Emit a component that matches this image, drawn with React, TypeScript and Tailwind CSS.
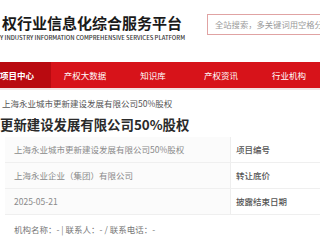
import React from "react";

const font = { fontFamily: '"Noto Sans CJK SC", "Noto Sans", sans-serif' };

export default function App() {
  const navItems = ["产权大数据", "知识库", "产权资讯", "行业机构"];
  const rows = [
    ["上海永业城市更新建设发展有限公司50%股权", "项目编号"],
    ["上海永业企业（集团）有限公司", "转让底价"],
    ["2025-05-21", "披露结束日期"],
  ];
  return (
    <div className="w-[320px] h-[240px] overflow-hidden bg-white" style={font}>
      <div className="h-[62px] flex pt-[13px]">
        <div className="pl-[2px] w-[207px] shrink-0">
          <div className="text-[15px] font-bold leading-[20px] text-[#1a1a1a] whitespace-nowrap">
            权行业信息化综合服务平台
          </div>
          <div className="text-[5.9px] leading-[7px] mt-[1px] text-[#333] whitespace-nowrap -ml-[2px] font-medium">
            Y INDUSTRY INFORMATION COMPREHENSIVE SERVICES PLATFORM
          </div>
        </div>
        <div className="w-[130px] shrink-0 h-[21px] mt-[1px] border border-[#e0a3a3] flex items-center pl-[7px]">
          <span className="text-[8.3px] text-[#9a9a9a] whitespace-nowrap leading-none">
            全站搜索，多关键词用空格分开
          </span>
        </div>
      </div>
      <div className="h-[26px] bg-[#d7131a] flex -ml-[17px] w-[340px]">
        <div className="w-[71px] h-full bg-[#b90a10] flex items-center justify-center text-white text-[8.5px] font-bold">
          项目中心
        </div>
        {navItems.map((n) => (
          <div key={n} className="w-[71px] h-full flex items-center justify-center text-white text-[8.5px]">
            {n}
          </div>
        ))}
      </div>
      <div className="h-[2px] bg-[#f3e4e4]" />
      <div className="mt-[7px] pl-[2px] text-[8.5px] leading-[12px] text-[#555] whitespace-nowrap">
        上海永业城市更新建设发展有限公司50%股权
      </div>
      <div className="mt-[7px] text-[13.4px] leading-[16px] font-bold text-[#2a2a2a] whitespace-nowrap">
        更新建设发展有限公司50%股权
      </div>
      <div className="mt-[5px] ml-[5px] w-[315px] flex flex-col">
        {rows.map(([l, r], i) => (
          <div key={i} className="h-[26px] flex border-b border-[#efefef]">
            <div className="w-[225px] bg-[#fbfbfb] flex items-center pl-[9px] text-[8.5px] text-[#8a8a8a] whitespace-nowrap">
              {l}
            </div>
            <div className="flex-1 border-l border-[#eeeeee] flex items-center pl-[5px] text-[8.5px] text-[#555] font-medium whitespace-nowrap">
              {r}
            </div>
          </div>
        ))}
      </div>
      <div className="mt-[8px] pl-[14px] text-[8.5px] leading-[12px] text-[#777] whitespace-nowrap">
        机构名称：- | 联系人：- / 联系电话：-
      </div>
    </div>
  );
}
